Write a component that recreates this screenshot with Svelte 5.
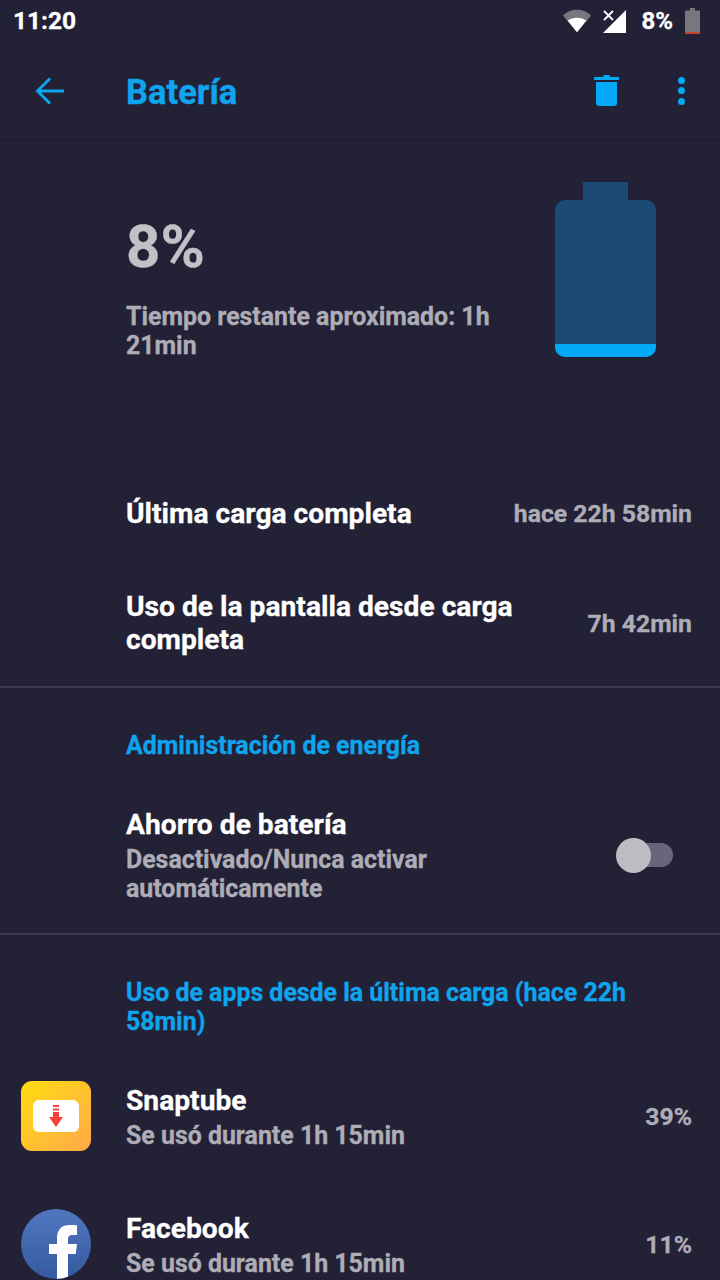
<script>
  const apps = [
    { name: "Snaptube", usage: "Se usó durante 1h 15min", pct: "39%", icon: "snaptube" },
    { name: "Facebook", usage: "Se usó durante 1h 15min", pct: "11%", icon: "facebook" },
  ];
</script>

<div class="screen">
  <header class="top">
    <div class="status">
      <span class="time">11:20</span>
      <div class="status-right">
        <svg class="wifi" width="30" height="24" viewBox="0 0 32 24">
          <path d="M16 24 1 6C5 2 10 0 16 0s11 2 15 6Z" fill="#79767f" />
          <path d="M16 24 6 11.500C8.800 9.500 12 8.400 16 8.400s7.200 1.100 10 3.100Z" fill="#fff" />
        </svg>
        <svg class="signal" width="24" height="25" viewBox="0 0 24 25">
          <path d="M0 24 23 1v23Z" fill="#fff" />
          <path d="M1 2l9 9M10 2l-9 9" stroke="#fff" stroke-width="1.800" fill="none" />
        </svg>
        <span class="pct">8%</span>
        <svg class="mini-batt" width="15" height="26" viewBox="0 0 15 26">
          <path d="M5 0h5v2.500h4a1 1 0 0 1 1 1V25a1 1 0 0 1-1 1H1a1 1 0 0 1-1-1V3.500a1 1 0 0 1 1-1h4Z" fill="#79767f" />
          <path d="M0 24h15v1a1 1 0 0 1-1 1H1a1 1 0 0 1-1-1Z" fill="#c9432c" />
        </svg>
      </div>
    </div>
    <div class="toolbar">
      <svg class="back" width="30" height="28" viewBox="0 0 30 28">
        <path d="M29 14H3M15 1.500 2.500 14 15 26.500" fill="none" stroke="#0ea5ee" stroke-width="3" />
      </svg>
      <h1>Batería</h1>
      <svg class="trash" width="25" height="32" viewBox="0 0 25 32">
        <path d="M0 3h8.500L10 1h5l1.500 2H25v3H0Z" fill="#03a9f4" />
        <path d="M2 8h21v21a3 3 0 0 1-3 3H5a3 3 0 0 1-3-3Z" fill="#03a9f4" />
      </svg>
      <div class="dots"><i></i><i></i><i></i></div>
    </div>
  </header>

  <section class="hero">
    <div class="hero-text">
      <div class="level">8%</div>
      <p>Tiempo restante aproximado: 1h 21min</p>
    </div>
    <div class="battery">
      <div class="cap"></div>
      <div class="body"><div class="fill"></div></div>
    </div>
  </section>

  <section class="stats">
    <div class="stat first">
      <span class="label">Última carga completa</span>
      <span class="val">hace 22h 58min</span>
    </div>
    <div class="stat second">
      <span class="label">Uso de la pantalla desde carga completa</span>
      <span class="val">7h 42min</span>
    </div>
  </section>

  <section class="power">
    <h2>Administración de energía</h2>
    <div class="saver">
      <div class="saver-text">
        <div class="label">Ahorro de batería</div>
        <div class="sub">Desactivado/Nunca activar automáticamente</div>
      </div>
      <div class="switch"><span class="knob"></span></div>
    </div>
  </section>

  <section class="usage">
    <h2>Uso de apps desde la última carga (hace 22h 58min)</h2>
    {#each apps as app (app.name)}
      <div class="app">
        {#if app.icon === "snaptube"}
          <svg class="app-icon" width="70" height="70" viewBox="0 0 70 70">
            <defs>
              <linearGradient id="st" x1="0" y1="0" x2="1" y2="1">
                <stop offset="0" stop-color="#ffdd10" />
                <stop offset="1" stop-color="#ffa94a" />
              </linearGradient>
            </defs>
            <rect width="70" height="70" rx="11" fill="url(#st)" />
            <rect x="12" y="19" width="46" height="32" rx="6" fill="#fff" />
            <path d="M32 24h6v2h-6ZM32 27.500h6v2h-6ZM32 31h6v5h4l-7 10-7-10h4Z" fill="#f8413a" />
          </svg>
        {:else}
          <svg class="app-icon" width="70" height="70" viewBox="0 0 70 70">
            <defs>
              <linearGradient id="fb" x1="0" y1="0" x2="0" y2="1">
                <stop offset="0" stop-color="#5077c0" />
                <stop offset="1" stop-color="#375a9e" />
              </linearGradient>
              <clipPath id="fbc"><circle cx="35" cy="35" r="35" /></clipPath>
            </defs>
            <circle cx="35" cy="35" r="35" fill="url(#fb)" />
            <path clip-path="url(#fbc)" d="M36 70V45h-8V35h8v-6c0-8.500 5-13 12.500-13 3 0 5.500.2 7.500.4v9.600h-4.500c-3.500 0-4.500 1.500-4.500 5V35h9l-1.300 10H47v25Z" fill="#fff" />
          </svg>
        {/if}
        <div class="app-text">
          <div class="label">{app.name}</div>
          <div class="sub">{app.usage}</div>
        </div>
        <span class="val">{app.pct}</span>
      </div>
    {/each}
  </section>
</div>

<style>
  :global(body) {
    background: #232136;
    overflow: hidden;
  }
  .screen {
    width: 720px;
    height: 1280px;
    overflow: hidden;
    background: #232136;
    font-family: Roboto, sans-serif;
    font-weight: 700;
    -webkit-text-stroke: 0.3px currentColor;
    color: #fff;
  }
  .top {
    height: 140px;
    border-bottom: 1px solid #1f1d30;
    box-shadow: 0 1px 2px rgba(20, 18, 32, 0.3);
    box-sizing: border-box;
  }
  .status {
    height: 44px;
    display: flex;
    align-items: center;
    justify-content: space-between;
    padding: 0 20px 2px 13px;
    box-sizing: border-box;
  }
  .time {
    font-size: 24.5px;
    line-height: 1;
  }
  .status-right {
    display: flex;
    align-items: center;
  }
  .wifi {
    margin-right: 11px;
  }
  .signal {
    margin-right: 14px;
  }
  .pct {
    font-size: 24px;
    line-height: 1;
    margin-right: 12px;
  }
  .toolbar {
    height: 96px;
    display: flex;
    align-items: center;
    padding-left: 35px;
  }
  .back {
    margin-right: 61px;
    position: relative;
    top: -1px;
  }
  h1 {
    margin: 0;
    flex: 1;
    font-size: 34.5px;
    font-weight: 700;
    color: #0ea5ee;
  }
  .trash {
    margin-right: 59px;
    position: relative;
    top: -2px;
  }
  .dots {
    display: flex;
    flex-direction: column;
    gap: 3.5px;
    margin-right: 35px;
    margin-bottom: 3px;
  }
  .dots i {
    width: 7px;
    height: 7px;
    border-radius: 50%;
    background: #03a9f4;
  }
  .hero {
    height: 302px;
    display: flex;
    justify-content: space-between;
    padding: 42px 64px 0 126px;
    box-sizing: border-box;
  }
  .hero-text {
    width: 370px;
    padding-top: 30px;
  }
  .level {
    font-size: 60px;
    line-height: 70px;
    color: #c2c1c7;
  }
  .hero-text p {
    margin: 20px 0 0;
    font-size: 24.9px;
    line-height: 29px;
    color: #aeadb6;
  }
  .battery {
    width: 101px;
    display: flex;
    flex-direction: column;
    align-items: center;
  }
  .cap {
    width: 45px;
    height: 18px;
    background: #1b4a76;
  }
  .body {
    width: 101px;
    height: 157px;
    border-radius: 10px;
    background: #1b4a76;
    overflow: hidden;
    display: flex;
    align-items: flex-end;
  }
  .fill {
    width: 100%;
    height: 13px;
    background: #03a9f4;
  }
  .stats {
    border-bottom: 2px solid #3d3b4e;
    padding-bottom: 24px;
  }
  .stat {
    display: flex;
    align-items: center;
    justify-content: space-between;
    padding: 0 28px 0 126px;
  }
  .stat .label {
    width: 400px;
  }
  .first {
    height: 142px;
  }
  .second {
    height: 78px;
  }
  .label {
    font-size: 28.2px;
    line-height: 33px;
    color: #fff;
  }
  .val {
    font-size: 24.75px;
    color: #aeadb6;
    white-space: nowrap;
  }
  h2 {
    margin: 0;
    font-size: 24.9px;
    line-height: 29px;
    font-weight: 700;
    color: #0ea5ee;
  }
  .power {
    padding: 43px 0 0 126px;
    height: 247px;
    box-sizing: border-box;
    border-bottom: 2px solid #3d3b4e;
  }
  .saver {
    display: flex;
    align-items: center;
    justify-content: space-between;
    margin-top: 48px;
    padding-right: 47px;
  }
  .saver-text {
    width: 400px;
  }
  .sub {
    font-size: 24.9px;
    line-height: 29px;
    margin-top: 4px;
    color: #aeadb6;
  }
  .switch {
    position: relative;
    width: 56px;
    height: 24px;
    margin-bottom: 2px;
    border-radius: 12px;
    background: #68667a;
  }
  .knob {
    position: absolute;
    left: -1px;
    top: -5px;
    width: 35px;
    height: 35px;
    border-radius: 50%;
    background: #bdbcc0;
  }
  .usage {
    padding: 43px 28px 0 0;
  }
  .usage h2 {
    padding-left: 126px;
    margin-bottom: 16px;
  }
  .app {
    display: flex;
    align-items: center;
    height: 128px;
    padding-left: 21px;
    box-sizing: border-box;
  }
  .app-icon {
    margin-right: 35px;
    flex: none;
  }
  .app-text {
    flex: 1;
    padding-top: 2px;
  }
</style>
